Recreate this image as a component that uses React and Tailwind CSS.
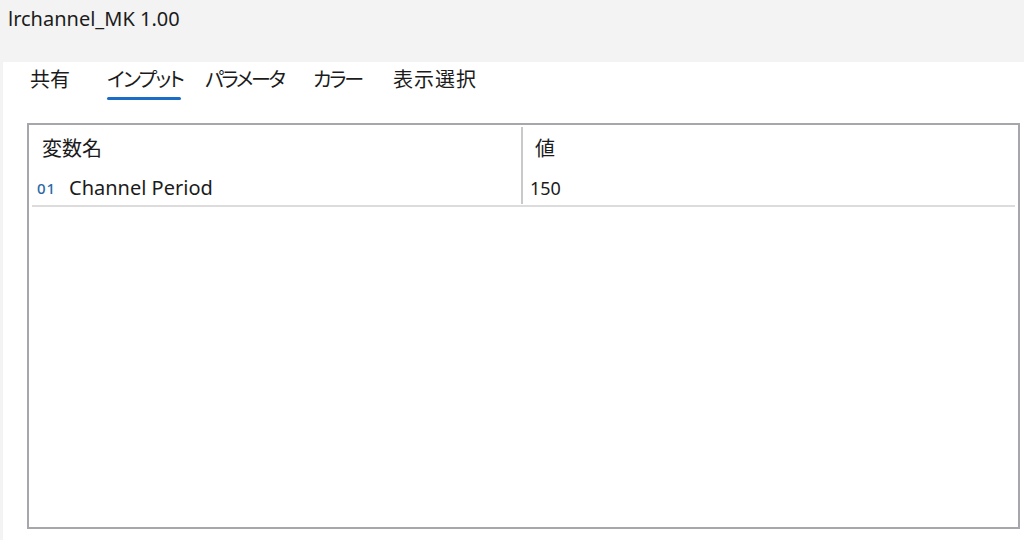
import React from 'react';

const tabs = [
  { label: '共有', w: 'w-[77px]', cls: '' },
  { label: 'インプット', w: 'w-[98px]', cls: 'tracking-[-1.6px]', active: true },
  { label: 'パラメータ', w: 'w-[108px]', cls: 'tracking-[-2.3px]' },
  { label: 'カラー', w: 'w-[80px]', cls: 'tracking-[-2.2px]' },
  { label: '表示選択', w: 'w-[100px]', cls: 'tracking-[1px]' },
];

const font = { fontFamily: '"Noto Sans", "Noto Sans CJK JP", sans-serif' };

export default function App() {
  return (
    <div
      className="w-[1024px] h-[540px] bg-[#f3f3f3] flex flex-col text-[#1b1b1b] overflow-hidden [font-feature-settings:'palt']"
      style={font}
    >
      {/* title */}
      <div className="h-[62px] px-[8px] pt-[5px] text-[20px] leading-[28px]">
        lrchannel_MK 1.00
      </div>

      <div className="flex-1 ml-[3px] bg-white flex flex-col">
        {/* tabs */}
        <div className="flex pl-[27px] pt-[4px] h-[61px]">
          {tabs.map((t) => (
            <div key={t.label} className={`${t.w} flex`}>
              <div className="flex flex-col">
                <span className={`text-[20px] leading-[28px] ${t.cls}`}>{t.label}</span>
                {t.active && <div className="h-[3px] mt-[3px] mr-[2px] rounded-full bg-[#1a6cc4]" />}
              </div>
            </div>
          ))}
        </div>

        {/* table */}
        <div className="flex-1 ml-[24px] mr-[4px] mb-[11px] border-2 border-[#a5a7ac] bg-white flex flex-col">
          <div className="flex h-[82px] mx-[3px] border-b-2 border-[#dcdcdc]">
            <div className="w-[489px] flex flex-col">
              <div className="h-[47px] pl-[10px] pt-[10px] text-[20px] leading-[28px]">変数名</div>
              <div className="flex items-center pl-[5px] h-[32px]">
                <span className="text-[15px] font-medium tracking-[1px] text-[#2a6aa8] w-[32px]">01</span>
                <span className="text-[20px]">Channel Period</span>
              </div>
            </div>
            <div className="w-[2px] bg-[#c9c9c9] mt-[2px] mb-[1px]" />
            <div className="flex-1 flex flex-col">
              <div className="h-[47px] pl-[12px] pt-[10px] text-[20px] leading-[28px]">値</div>
              <div className="flex items-center pl-[7px] h-[32px] text-[18px]">150</div>
            </div>
          </div>
        </div>
      </div>
    </div>
  );
}
